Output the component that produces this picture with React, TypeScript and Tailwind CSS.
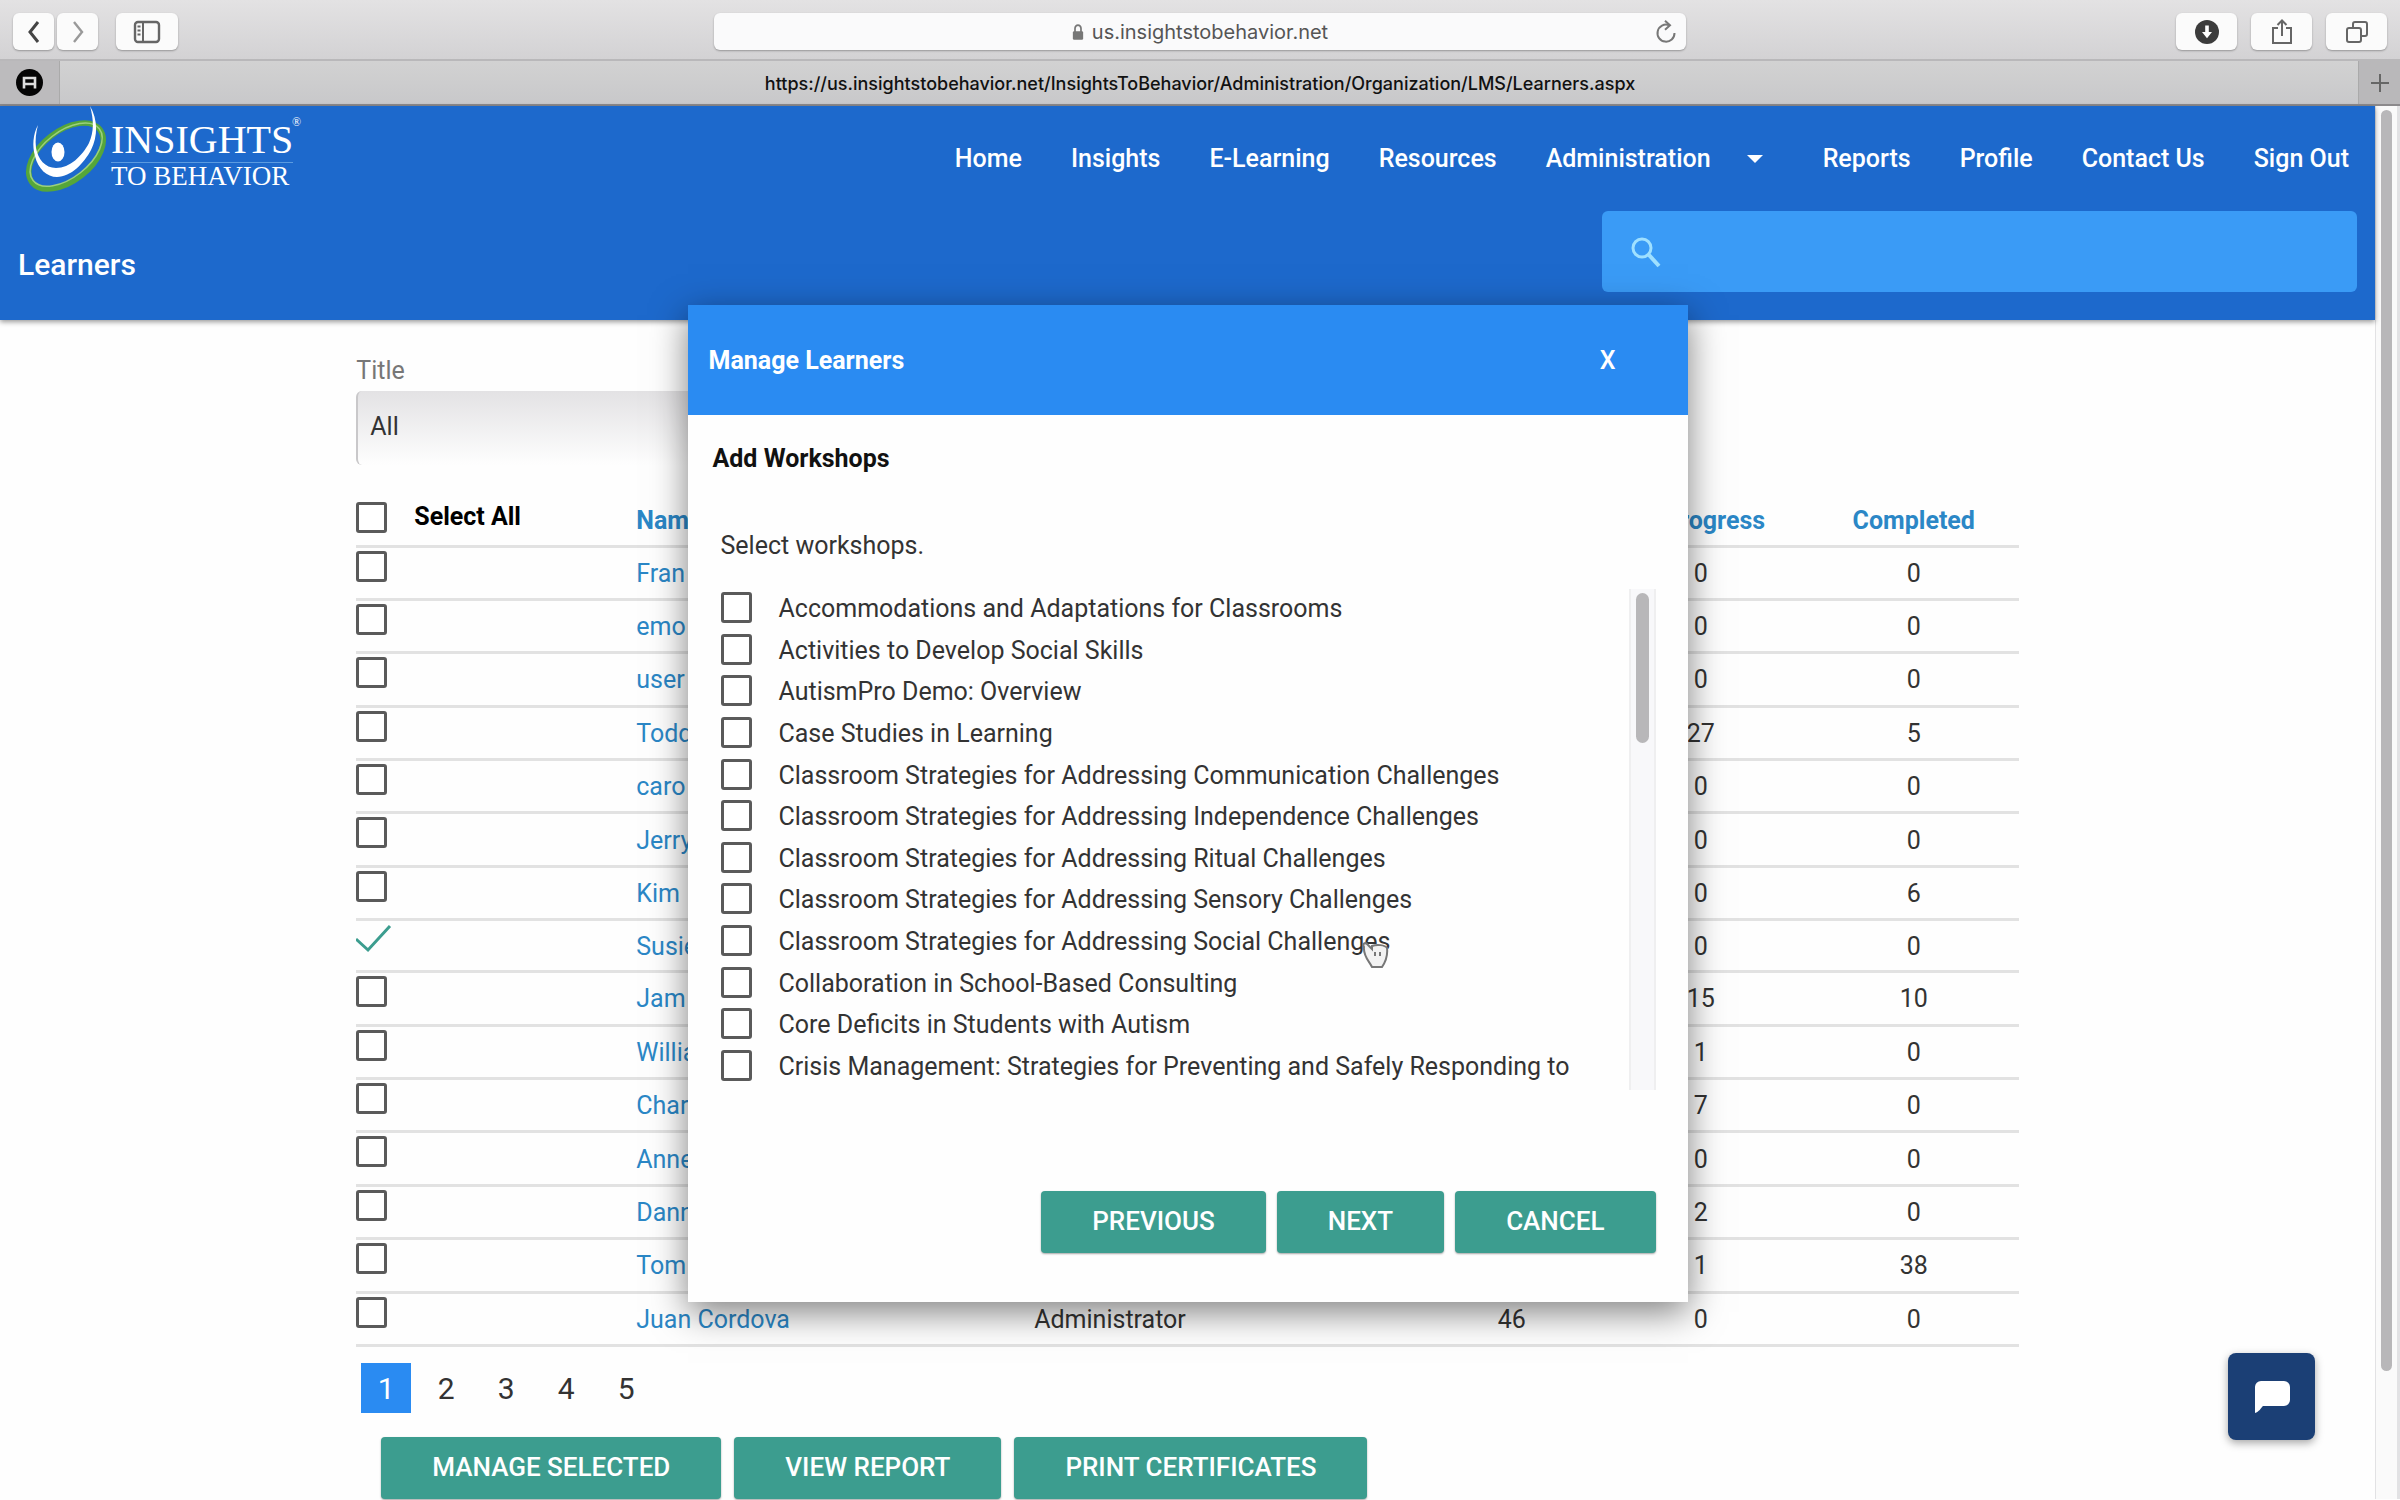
import React from "react";

type Learner = {
  name: string;
  role?: string;
  assigned?: number;
  progress: number;
  completed: number;
  checked?: boolean;
};

const learners: Learner[] = [
  { name: "Fran", progress: 0, completed: 0 },
  { name: "emo", progress: 0, completed: 0 },
  { name: "user", progress: 0, completed: 0 },
  { name: "Todd", progress: 27, completed: 5 },
  { name: "caro", progress: 0, completed: 0 },
  { name: "Jerry", progress: 0, completed: 0 },
  { name: "Kim", progress: 0, completed: 6 },
  { name: "Susie", progress: 0, completed: 0, checked: true },
  { name: "Jam", progress: 15, completed: 10 },
  { name: "Willia", progress: 1, completed: 0 },
  { name: "Char", progress: 7, completed: 0 },
  { name: "Anne", progress: 0, completed: 0 },
  { name: "Dann", progress: 2, completed: 0 },
  { name: "Tom", progress: 1, completed: 38 },
  { name: "Juan Cordova", role: "Administrator", assigned: 46, progress: 0, completed: 0 },
];

const workshops = [
  "Accommodations and Adaptations for Classrooms",
  "Activities to Develop Social Skills",
  "AutismPro Demo: Overview",
  "Case Studies in Learning",
  "Classroom Strategies for Addressing Communication Challenges",
  "Classroom Strategies for Addressing Independence Challenges",
  "Classroom Strategies for Addressing Ritual Challenges",
  "Classroom Strategies for Addressing Sensory Challenges",
  "Classroom Strategies for Addressing Social Challenges",
  "Collaboration in School-Based Consulting",
  "Core Deficits in Students with Autism",
  "Crisis Management: Strategies for Preventing and Safely Responding to",
];

const chromeButton =
  "flex h-[37px] items-center justify-center rounded-md bg-[#fbfbfb] text-[#555] shadow-[0_1px_2px_rgba(0,0,0,0.3)]";

const checkboxClass =
  "block size-[31px] shrink-0 appearance-none rounded-[3px] border-[3px] border-[#5a5a5a] bg-white";

const ActionButton = ({ children }: { children: string }) => (
  <button className="h-[62px] rounded-[4px] bg-[#3c9d8f] px-[51px] pb-0.5 text-[26px] font-medium text-white shadow-[0_1px_2px_rgba(0,0,0,0.35)]">
    {children}
  </button>
);

const BrowserChrome = () => (
  <div className="font-['Inter',sans-serif]">
    <div className="grid h-[61px] grid-cols-[1fr_972px_1fr] items-center border-b-2 border-[#b9b8ba] bg-linear-to-b from-[#e3e2e3] to-[#d3d2d4] px-[13px] pt-1">
      <div className="flex">
        <button aria-label="Back" className={`${chromeButton} mr-[3px] w-[41px]`}>
          <svg className="h-6 w-4" viewBox="0 0 16 24" fill="none" stroke="#444" strokeWidth="3">
            <path d="M12 2 4 12l8 10" />
          </svg>
        </button>
        <button aria-label="Forward" className={`${chromeButton} mr-[18px] w-[41px]`}>
          <svg className="h-6 w-4" viewBox="0 0 16 24" fill="none" stroke="#999" strokeWidth="2.4">
            <path d="m4 2 8 10-8 10" />
          </svg>
        </button>
        <button aria-label="Show sidebar" className={`${chromeButton} w-[62px]`}>
          <svg className="h-6 w-7" viewBox="0 0 28 24" fill="none" stroke="#666" strokeWidth="2.4">
            <rect x="2" y="2" width="24" height="20" rx="3" />
            <path d="M10 2v20M4.500 6.500h3M4.500 10.500h3M4.500 14.500h3" strokeWidth="2" />
          </svg>
        </button>
      </div>
      <div className="flex h-[37px] items-center rounded-md bg-[#fafafb] px-2 text-[#555] shadow-[0_1px_2px_rgba(0,0,0,0.3)]">
        <div className="flex flex-1 items-center justify-center gap-2 pl-6 text-xl">
          <svg className="h-[18px] w-3" viewBox="0 0 14 20" fill="#777">
            <rect x="1" y="9" width="12" height="10" rx="1.500" />
            <path d="M3.500 10V6a3.500 4 0 0 1 7 0v4" fill="none" stroke="#777" strokeWidth="2" />
          </svg>
          us.insightstobehavior.net
        </div>
        <button aria-label="Reload">
          <svg className="size-6" viewBox="0 0 24 24" fill="none" stroke="#777" strokeWidth="2">
            <path d="M15 5.200A8.500 8.500 0 1 0 20.500 13" />
            <path d="M11 .8 16 5.300l-5 4.500" />
          </svg>
        </button>
      </div>
      <div className="flex justify-end gap-3.5">
        <button aria-label="Downloads" className={`${chromeButton} w-[61px]`}>
          <svg className="size-6" viewBox="0 0 24 24">
            <circle cx="12" cy="12" r="12" fill="#3c3c3c" />
            <path d="M10.200 5.500h3.600V12H17l-5 6.200L7 12h3.200z" fill="#fff" />
          </svg>
        </button>
        <button aria-label="Share" className={`${chromeButton} w-[61px]`}>
          <svg className="h-7 w-6" viewBox="0 0 24 28" fill="none" stroke="#666" strokeWidth="2">
            <path d="M8 10H3v15h18V10h-5M12 18V3M7.500 7 12 2.500 16.500 7" />
          </svg>
        </button>
        <button aria-label="Show tabs" className={`${chromeButton} w-[61px]`}>
          <svg className="size-6" viewBox="0 0 24 24" fill="none" stroke="#666" strokeWidth="2">
            <rect x="2" y="8" width="14" height="14" rx="2" />
            <path d="M8 8V4a2 2 0 0 1 2-2h10a2 2 0 0 1 2 2v10a2 2 0 0 1-2 2h-4" />
          </svg>
        </button>
      </div>
    </div>
    <div className="flex h-[45px] items-stretch border-b-2 border-[#8c8a8c] bg-linear-to-b from-[#d2d2d2] to-[#c8c8ca] text-lg font-medium text-[#111]">
      <div className="flex w-[60px] items-center justify-center border-r border-[#aaa] bg-[#bcbbbd]">
        <svg className="size-[27px]" viewBox="0 0 27 27">
          <circle cx="13.500" cy="13.500" r="13.500" fill="#050505" />
          <path d="M8 19.500V9h11v10.500M9 15h9" fill="none" stroke="#ddd" strokeWidth="2.600" />
        </svg>
      </div>
      <div className="flex flex-1 items-center justify-center pt-0.5 pr-[18px]">
        https://us.insightstobehavior.net/InsightsToBehavior/Administration/Organization/LMS/Learners.aspx
      </div>
      <button aria-label="New tab" className="flex w-[42px] items-center justify-center border-l border-[#aaa] bg-[#b9b8ba]">
        <svg className="size-[18px]" viewBox="0 0 18 18" stroke="#666" strokeWidth="2">
          <path d="M9 0v18M0 9h18" />
        </svg>
      </button>
    </div>
  </div>
);

const Logo = () => (
  <div className="flex h-[90px] items-start pl-6">
    <svg className="h-[90px] w-[84px]" viewBox="0 0 84 90" fill="none">
      <g transform="rotate(-38 42 50)">
        <ellipse cx="42" cy="50" rx="43" ry="25" stroke="#55a63a" strokeWidth="5.500" />
        <ellipse cx="43" cy="49" rx="42" ry="23" stroke="#9bd07c" strokeWidth="1.500" />
      </g>
      <path
        d="M14 19C9 28 8 40 11 50c3 13 12 21 22 21 14 0 27-14 34-27C74 30 74 14 66 0c4 14 4 26-1 37-7 13-19 25-33 25-11 0-18-9-20-20-1-8 0-16 2-23z"
        fill="#fff"
      />
      <ellipse cx="34" cy="46" rx="6.500" ry="9.500" fill="#fff" />
    </svg>
    <div className="relative flex flex-col pt-4 pl-[3px] font-['Liberation_Serif',serif] text-white">
      <div className="text-[40px] leading-9">INSIGHTS</div>
      <div className="mt-1 border-t border-[#5b9be0] text-[27px] leading-[26px]">TO BEHAVIOR</div>
      <span className="absolute top-2.5 -right-2 text-xs leading-3">®</span>
    </div>
  </div>
);

const SiteHeader = () => (
  <header className="h-[214px] bg-[#1d69cc] text-white shadow-[0_2px_5px_rgba(0,0,0,0.4)]">
    <div className="flex items-start justify-between pr-[26px]">
      <Logo />
      <nav className="flex items-center gap-[49px] pt-9 text-[25px] leading-[34px] font-medium">
        <a href="#home">Home</a>
        <a href="#insights">Insights</a>
        <a href="#elearning">E-Learning</a>
        <a href="#resources">Resources</a>
        <a href="#administration" className="mr-[11px] flex items-center gap-9">
          Administration
          <svg className="h-2 w-4" viewBox="0 0 18 9" fill="#fff">
            <path d="M0 0h18L9 9z" />
          </svg>
        </a>
        <a href="#reports">Reports</a>
        <a href="#profile">Profile</a>
        <a href="#contact">Contact Us</a>
        <a href="#signout">Sign Out</a>
      </nav>
    </div>
    <div className="flex items-start justify-between px-[18px] pt-[15px]">
      <h1 className="pt-9 text-[30px] leading-[36px] font-medium">Learners</h1>
      <label className="flex h-[81px] w-[755px] items-center rounded-md bg-[#3a9bf6] px-7">
        <svg className="size-8" viewBox="0 0 32 32" fill="none" stroke="#9fe0ff" strokeWidth="3">
          <circle cx="12" cy="12" r="9" />
          <path d="m19 19 10 11" strokeWidth="4" />
        </svg>
        <input type="search" aria-label="Search" className="ml-6 flex-1 bg-transparent text-[25px] outline-none" />
      </label>
    </div>
  </header>
);

const LearnerTable = () => (
  <table className="mt-[22px] h-[860px] w-full table-fixed border-collapse text-center text-[25px] leading-[30px] text-[#333]">
    <colgroup>
      <col className="w-[280px]" />
      <col className="w-[153px]" />
      <col />
      <col className="w-[162px]" />
      <col className="w-[216px]" />
      <col className="w-[210px]" />
    </colgroup>
    <thead>
      <tr className="h-[59px] border-b-3 border-[#e2e2e2] font-bold text-[#2b87c6]">
        <th className="pt-[3px] text-left">
          <label className="flex items-center gap-[27px] text-black">
            <input type="checkbox" className={checkboxClass} />
            Select All
          </label>
        </th>
        <th className="pt-2.5 text-left"><a href="#name">Name</a></th>
        <th className="pt-2.5"><a href="#role">Role</a></th>
        <th className="pt-2.5"><a href="#assigned">Assigned</a></th>
        <th className="pt-2.5"><a href="#progress">In Progress</a></th>
        <th className="pt-2.5"><a href="#completed">Completed</a></th>
      </tr>
    </thead>
    <tbody>
      {learners.map((l) => (
        <tr key={l.name} className="border-b-3 border-[#e2e2e2]">
          <td className="pt-[3px] align-top">
            {l.checked ? (
              <label className="block w-10">
                <input type="checkbox" defaultChecked aria-label={l.name} className="peer sr-only" />
                <svg className="h-[30px] w-9" viewBox="0 0 36 30" fill="none" stroke="#3c9d8f" strokeWidth="3">
                  <path d="m0 15 12 11L34 2" />
                </svg>
              </label>
            ) : (
              <input type="checkbox" aria-label={l.name} className={checkboxClass} />
            )}
          </td>
          <td className="pt-0.5 text-left whitespace-nowrap text-[#2b87c6]">
            <a href="#learner">{l.name}</a>
          </td>
          <td className="pt-0.5">{l.role}</td>
          <td className="pt-0.5">{l.assigned}</td>
          <td className="pt-0.5">{l.progress}</td>
          <td className="pt-0.5">{l.completed}</td>
        </tr>
      ))}
    </tbody>
  </table>
);

const ManageDialog = () => (
  <div
    role="dialog"
    aria-label="Manage Learners"
    className="absolute top-[199px] left-1/2 z-10 flex h-[997px] w-[1000px] -translate-x-1/2 flex-col bg-[#fefefe] text-[25px] leading-[30px] text-[#333] shadow-[0_10px_34px_rgba(0,0,0,0.5)]"
  >
    <div className="flex h-[110px] items-center justify-between bg-[#2a8bf2] pt-0.5 pr-[72px] pl-[21px] text-white">
      <h2 className="font-bold">Manage Learners</h2>
      <button aria-label="Close" className="font-medium">X</button>
    </div>
    <h3 className="mt-[29px] ml-[25px] font-bold text-[#111]">Add Workshops</h3>
    <p className="mt-[57px] ml-[33px]">Select workshops.</p>
    <div className="mt-7 mr-8 ml-[33px] flex h-[501px] shrink-0 justify-between">
      <div className="flex flex-col justify-between pt-[3px]">
        {workshops.map((w) => (
          <label key={w} className="flex h-10 items-start gap-[27px] leading-[34px]">
            <input type="checkbox" className={checkboxClass} />
            {w}
          </label>
        ))}
      </div>
      <div className="w-[27px] border-x-2 border-[#efeff0] bg-[#f8f8fa] px-[5px] pt-1">
        <div className="h-[150px] rounded-full bg-[#b8b7b9]" />
      </div>
    </div>
    <div className="mt-auto mr-8 mb-[49px] flex justify-end gap-[11px]">
      <ActionButton>PREVIOUS</ActionButton>
      <ActionButton>NEXT</ActionButton>
      <ActionButton>CANCEL</ActionButton>
    </div>
    {/* pointer hand */}
    <svg className="absolute top-[630px] left-[673px] h-[34px] w-[28px]" viewBox="0 0 28 34" fill="#f2f2f2" stroke="#777" strokeWidth="2">
      <path d="M3 12c-2-3 1-5 3-3l5 5v-3c5-2 13-1 15 2 1 8-1 13-5 19H11C8 26 2 21 3 12z" />
      <path d="M14 17v4M19 17v4" />
    </svg>
  </div>
);

const App: React.FC = () => (
  <div className="h-screen overflow-hidden bg-[#fefefe] font-['Roboto',sans-serif]">
    <BrowserChrome />
    <div className="flex">
      <div className="relative min-w-0 flex-1">
        <SiteHeader />
        <main className="mx-auto w-[70%]">
          <label className="block w-1/2 pt-9 text-[25px] leading-[30px] text-[#777]">
            Title
            <select className="mt-[5px] block h-[74px] w-full appearance-none rounded-md border-l-2 border-[#c9c8ca] bg-linear-to-b from-[#e3e2e4] to-[#fefefe] pb-0.5 pl-3 text-[#333]">
              <option>All</option>
            </select>
          </label>
          <LearnerTable />
          <nav aria-label="Pages" className="mt-4 flex gap-2.5 pl-[5px] text-[30px] text-[#333]">
            <button className="size-[50px] bg-[#2a8bf2] text-white">1</button>
            <button className="size-[50px]">2</button>
            <button className="size-[50px]">3</button>
            <button className="size-[50px]">4</button>
            <button className="size-[50px]">5</button>
          </nav>
          <div className="mt-6 flex gap-[13px] pl-[25px]">
            <ActionButton>MANAGE SELECTED</ActionButton>
            <ActionButton>VIEW REPORT</ActionButton>
            <ActionButton>PRINT CERTIFICATES</ActionButton>
          </div>
        </main>
        <ManageDialog />
      </div>
      <div className="w-[25px] border-r-3 border-l border-[#e2e2e4] bg-[#fafafa] px-[5px] pt-1">
        <div className="h-[1261px] rounded-full bg-[#b8b7b9]" />
      </div>
    </div>
    <button
      aria-label="Chat"
      className="fixed right-[85px] bottom-[60px] flex size-[87px] items-center justify-center rounded-lg bg-[#1b3f75] shadow-[0_3px_8px_rgba(0,0,0,0.35)]"
    >
      <svg className="h-8 w-9" viewBox="0 0 36 32" fill="#fff">
        <path d="M7 0h23a6 6 0 0 1 6 6v13a6 6 0 0 1-6 6H9c-2 2-4 6-8 7V6a6 6 0 0 1 6-6z" />
      </svg>
    </button>
  </div>
);

export default App;
